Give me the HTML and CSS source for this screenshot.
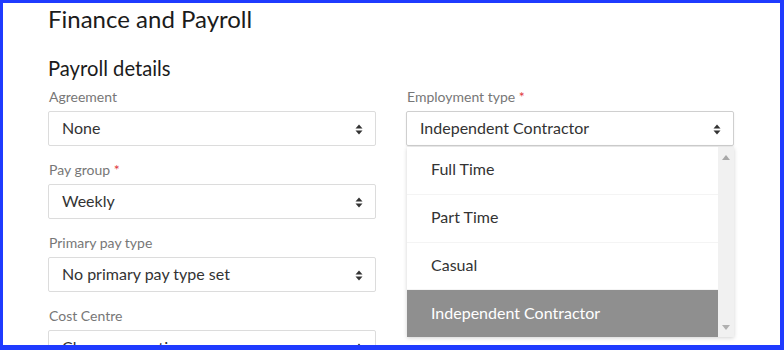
FILE: index.html
```html
<!DOCTYPE html>
<html lang="en">
<head>
<meta charset="utf-8">
<title>Finance and Payroll</title>
<link rel="stylesheet" href="styles.css">
</head>
<body>
<div class="frame">
  <h1 class="title">Finance and Payroll</h1>
  <h2 class="subtitle">Payroll details</h2>
  <div class="form">
    <div class="col">
      <div class="field">
        <label class="label">Agreement</label>
        <div class="select"><span class="value">None</span><svg class="caret" width="8" height="11" viewBox="0 0 8 11"><path d="M4 0.5 L7.5 4.5 H0.5 Z M4 10.5 L7.5 6.5 H0.5 Z" fill="#333"/></svg></div>
      </div>
      <div class="field">
        <label class="label">Pay group <span class="req">*</span></label>
        <div class="select"><span class="value">Weekly</span><svg class="caret" width="8" height="11" viewBox="0 0 8 11"><path d="M4 0.5 L7.5 4.5 H0.5 Z M4 10.5 L7.5 6.5 H0.5 Z" fill="#333"/></svg></div>
      </div>
      <div class="field">
        <label class="label">Primary pay type</label>
        <div class="select"><span class="value">No primary pay type set</span><svg class="caret" width="8" height="11" viewBox="0 0 8 11"><path d="M4 0.5 L7.5 4.5 H0.5 Z M4 10.5 L7.5 6.5 H0.5 Z" fill="#333"/></svg></div>
      </div>
      <div class="field">
        <label class="label">Cost Centre</label>
        <div class="select"><span class="value">Choose an option</span><svg class="caret" width="8" height="11" viewBox="0 0 8 11"><path d="M4 0.5 L7.5 4.5 H0.5 Z M4 10.5 L7.5 6.5 H0.5 Z" fill="#333"/></svg></div>
      </div>
    </div>
    <div class="col">
      <div class="field open">
        <label class="label">Employment type <span class="req">*</span></label>
        <div class="select select-open"><span class="value">Independent Contractor</span><svg class="caret" width="8" height="11" viewBox="0 0 8 11"><path d="M4 0.5 L7.5 4.5 H0.5 Z M4 10.5 L7.5 6.5 H0.5 Z" fill="#333"/></svg></div>
        <div class="menu">
          <ul class="options">
            <li class="option">Full Time</li>
            <li class="option">Part Time</li>
            <li class="option">Casual</li>
            <li class="option selected">Independent Contractor</li>
          </ul>
          <div class="scrollbar">
            <svg width="8" height="5" viewBox="0 0 8 5"><path d="M4 0 L8 5 H0 Z" fill="#a8a8a8"/></svg>
            <svg width="8" height="5" viewBox="0 0 8 5"><path d="M4 5 L8 0 H0 Z" fill="#b0b0b0"/></svg>
          </div>
        </div>
      </div>
    </div>
  </div>
</div>
</body>
</html>
```
FILE: styles.css
```css
html, body {
  margin: 0;
  padding: 0;
  background: #ffffff;
}
body {
  font-family: Lato, "Open Sans", "Liberation Sans", sans-serif;
  color: #333;
}
.frame {
  box-sizing: border-box;
  width: 784px;
  height: 350px;
  border-style: solid;
  border-color: #1f3bff;
  border-width: 3px 4px 5px 3px;
  padding: 0 50px 0 45px;
  overflow: hidden;
  background: #fff;
}
.title {
  margin: 0;
  font-size: 24px;
  font-weight: 400;
  line-height: 32px;
  color: #1b1b1b;
}
.subtitle {
  margin: 21px 0 0;
  font-size: 20.2px;
  font-weight: 400;
  line-height: 24px;
  color: #1b1b1b;
}
.form {
  margin-top: 8px;
  display: grid;
  grid-template-columns: 328px 328px;
  column-gap: 30px;
  align-items: start;
}
.col {
  display: flex;
  flex-direction: column;
  gap: 15px;
}
.field {
  display: flex;
  flex-direction: column;
}
.open {
  position: relative;
}
.label {
  display: block;
  font-size: 14px;
  line-height: 18px;
  color: #777;
  margin-bottom: 5px;
  padding-left: 1px;
}
.req {
  color: #e0383e;
}
.select {
  box-sizing: border-box;
  height: 35px;
  border: 1px solid #dcdcdc;
  border-radius: 2px;
  display: flex;
  align-items: center;
  justify-content: space-between;
  padding: 0 12px 0 13px;
  font-size: 16px;
  color: #333;
}
.value {
  margin-bottom: 3px;
}
.select-open {
  border-color: #cfcfcf;
  box-shadow: 0 1px 2px rgba(0, 0, 0, 0.08);
}
.caret {
  display: block;
  flex: none;
  margin-top: 1px;
}
.menu {
  position: absolute;
  left: 1px;
  right: 0;
  top: 59px;
  height: 190px;
  display: flex;
  background: #fff;
  box-shadow: 0 1px 4px rgba(0, 0, 0, 0.18);
}
.options {
  list-style: none;
  margin: 0;
  padding: 0;
  flex: 1;
  display: flex;
  flex-direction: column;
}
.option {
  flex: 1;
  display: flex;
  align-items: center;
  padding-left: 24px;
  padding-bottom: 3px;
  font-size: 16px;
  color: #333;
  border-bottom: 1px solid #f4f4f4;
}
.option.selected {
  background: #8f8f8f;
  color: #fff;
  border-bottom: 0;
}
.scrollbar {
  width: 16px;
  flex: none;
  background: #f1f1f1;
  display: flex;
  flex-direction: column;
  justify-content: space-between;
  align-items: center;
  padding: 8px 0 7px;
}
.scrollbar svg {
  display: block;
}
```
